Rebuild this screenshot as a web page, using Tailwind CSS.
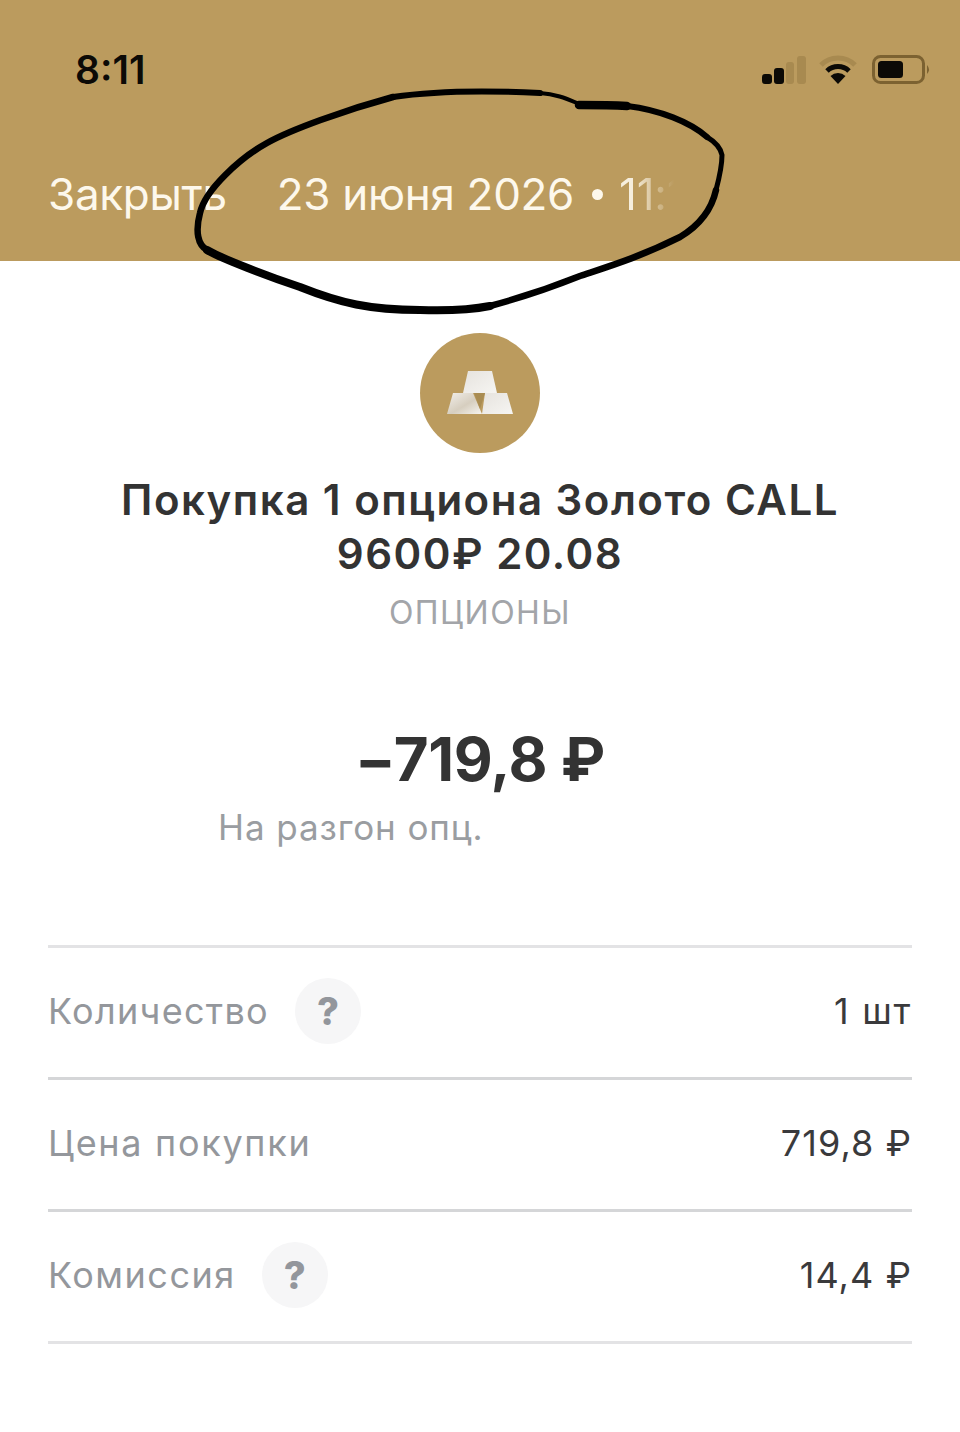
<!DOCTYPE html>
<html lang="ru">
<head>
<meta charset="utf-8">
<script src="https://cdn.jsdelivr.net/npm/@tailwindcss/browser@4"></script>
</head>
<body class="bg-white font-['Inter','Roboto',sans-serif]">
<div class="relative w-[960px] h-[1432px] overflow-hidden bg-white">
  <header class="h-[261px] bg-[#bb9b5e] flex flex-col">
    <div class="flex items-center justify-between h-[60px] mt-[40px] pl-[75px] pr-[28px]">
      <span class="text-[39px] leading-[60px] font-semibold text-[#0c0a06]">8:11</span>
      <div class="flex items-center gap-[12px]">
        <svg width="46" height="28" viewBox="0 0 46 28">
          <rect x="1" y="18" width="10" height="10" rx="3" fill="#0c0a06"/>
          <rect x="13" y="12" width="10" height="16" rx="3" fill="#0c0a06"/>
          <rect x="25" y="6" width="8" height="22" rx="3" fill="#a88a50"/>
          <rect x="36" y="0" width="9" height="28" rx="3" fill="#a88a50"/>
        </svg>
        <svg width="38" height="30" viewBox="0 0 38 30" fill="none" stroke-linecap="butt">
          <path d="M2 10 A24 24 0 0 1 36 10" stroke="#a88a50" stroke-width="5"/>
          <path d="M8 16 A16 16 0 0 1 30 16" stroke="#0c0a06" stroke-width="5"/>
          <path d="M19 29 L11.500 21 A11 11 0 0 1 26.500 21 Z" fill="#0c0a06"/>
        </svg>
        <svg width="60" height="30" viewBox="0 0 60 30" class="ml-[3px]">
          <rect x="1.500" y="1.500" width="50" height="26" rx="7" fill="none" stroke="#7c6231" stroke-width="3"/>
          <rect x="6" y="6" width="25" height="17" rx="3.500" fill="#0c0a06"/>
          <path d="M55 10 Q59 14.500 55 19 Z" fill="#7c6231"/>
        </svg>
      </div>
    </div>
    <div class="flex items-center h-[60px] mt-[64px] pl-[48px] text-[44px] leading-[60px] text-[#fdf8ec] tracking-[-0.3px] whitespace-nowrap">
      <span>Закрыть</span>
      <span class="ml-[50px]">23 июня 2026</span>
      <span class="ml-[18px] mr-[16px] w-[11px] h-[11px] rounded-full bg-[#fdf8ec]"></span>
      <span class="bg-linear-to-r from-[#fdf8ec]/90 from-[20%] to-transparent to-[85%] bg-clip-text text-transparent">11:1</span>
    </div>
  </header>

  <main class="flex flex-col items-center">
    <div class="mt-[72px] w-[120px] h-[120px] rounded-full bg-[#bb9b5e] flex items-center justify-center">
      <svg width="70" height="46" viewBox="0 0 70 46">
        <defs>
          <linearGradient id="g1" x1="0" y1="0" x2="1" y2="1"><stop offset="0" stop-color="#f2efea"/><stop offset="0.55" stop-color="#d6cebf"/><stop offset="1" stop-color="#f6f4ef"/></linearGradient>
          <linearGradient id="g2" x1="0" y1="0" x2="1" y2="1"><stop offset="0" stop-color="#e6e3de"/><stop offset="1" stop-color="#f6f5f2"/></linearGradient>
        </defs>
        <path d="M8 23 H28 L37 44 H2 Z" fill="url(#g1)"/>
        <path d="M40 23 H62 L68 44 H37 Z" fill="url(#g2)"/>
        <path d="M23 1 H47 L52 23 H18 Z" fill="url(#g2)"/>
        <path d="M29 23 H40 L35 39 Z" fill="#a98c52"/>
      </svg>
    </div>
    <h1 class="mt-[20px] w-[860px] text-center text-[42px] leading-[54px] font-semibold text-[#333333] tracking-[1.5px]">Покупка 1 опциона Золото CALL<br>9600₽ 20.08</h1>
    <p class="mt-[9px] text-[32px] leading-[46px] text-[#a3a5a9] tracking-[1.45px]">ОПЦИОНЫ</p>
    <p class="mt-[87px] text-[60px] leading-[72px] font-bold text-[#333333] tracking-[-0.4px]">−719,8 ₽</p>
    <p class="self-start ml-[218px] mt-[9px] text-[35px] leading-[46px] text-[#9a9da1] tracking-[0.9px]">На разгон опц.</p>
  </main>

  <section class="mx-[48px] mt-[95px] border-t-[3px] border-[#e3e3e5]">
    <div class="flex items-center justify-between h-[132px] pb-[3px] border-b-[3px] border-[#d5d6d8] text-[36px]">
      <div class="flex items-center gap-[26px]">
        <span class="text-[#94979c] tracking-[1.3px]">Количество</span>
        <span class="w-[66px] h-[66px] rounded-full bg-[#f6f6f7] flex items-center justify-center text-[38px] font-extrabold text-[#93969c]">?</span>
      </div>
      <span class="text-[#3a3a3c] tracking-[1.7px]">1 шт</span>
    </div>
    <div class="flex items-center justify-between h-[132px] pb-[3px] border-b-[3px] border-[#d5d6d8] text-[36px]">
      <span class="text-[#94979c] tracking-[1.7px]">Цена покупки</span>
      <span class="text-[#3a3a3c] tracking-[1.1px]">719,8 ₽</span>
    </div>
    <div class="flex items-center justify-between h-[132px] pb-[3px] border-b-[3px] border-[#e3e3e5] text-[36px]">
      <div class="flex items-center gap-[26px]">
        <span class="text-[#94979c] tracking-[1.5px]">Комиссия</span>
        <span class="w-[66px] h-[66px] rounded-full bg-[#f6f6f7] flex items-center justify-center text-[38px] font-extrabold text-[#93969c]">?</span>
      </div>
      <span class="text-[#3a3a3c] tracking-[1.1px]">14,4 ₽</span>
    </div>
  </section>

  <svg class="absolute left-0 top-0 pointer-events-none" width="960" height="340" viewBox="0 0 960 340" fill="none" stroke="#000" stroke-linecap="round" stroke-linejoin="round">
    <path d="M577 103 C565 98 555 94 540 93" stroke-width="4"/>
    <path d="M540 93 C500 91 440 90 393 97" stroke-width="6"/>
    <path d="M393 97 C345 110 290 130 267 143 C240 158 205 190 200 213 C195 232 198 245 207 250" stroke-width="6.500"/>
    <path d="M207 250 C220 258 270 277 300 287 C340 303 370 310 420 310 C450 311 470 310 490 306" stroke-width="8"/>
    <path d="M490 306 C520 298 550 288 580 276 C610 266 640 257 680 237 C700 225 712 208 716 190" stroke-width="6.500"/>
    <path d="M716 190 C720 175 722 165 722 155 C720 145 712 140 707 137" stroke-width="5"/>
    <path d="M707 137 C690 122 660 110 627 106" stroke-width="6"/>
    <path d="M627 106 C610 105 595 105 579 105" stroke-width="8.500"/>
  </svg>
</div>
</body>
</html>
